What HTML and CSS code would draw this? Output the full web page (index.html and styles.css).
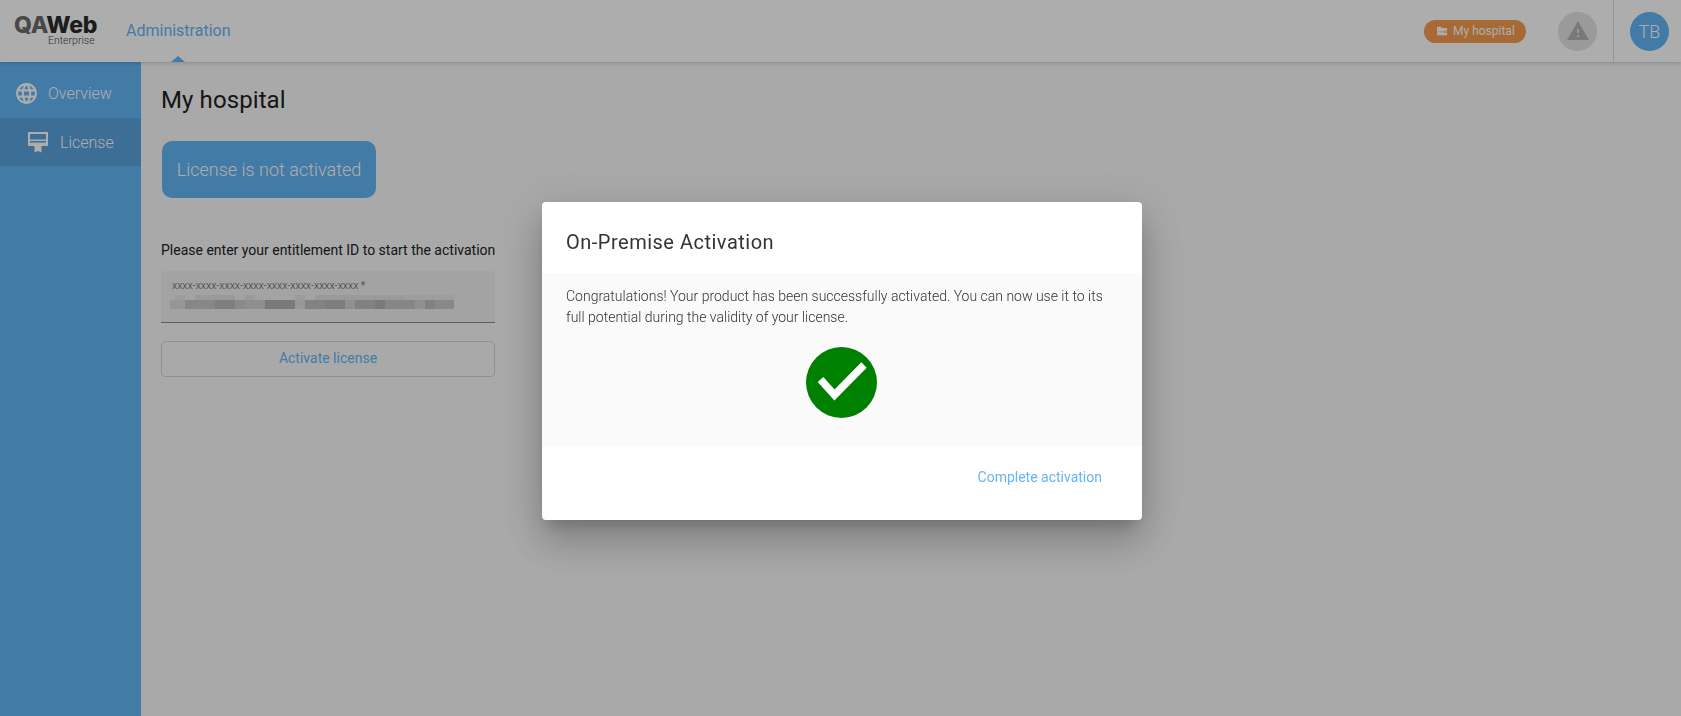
FILE: index.html
```html
<!DOCTYPE html>
<html lang="en">
<head>
    <meta charset="UTF-8">
    <title>QAWeb Enterprise - Administration</title>
    <link rel="stylesheet" href="styles.css">
</head>
<body>
    <header class="topbar">
        <div class="logo">
            <div class="logo-name"><span class="logo-qa">QA</span>Web</div>
            <div class="logo-sub">Enterprise</div>
        </div>
        <a href="#" class="nav-link">Administration</a>
        <div class="topbar-right">
            <div class="org-badge">
                <svg class="org-icon" viewBox="0 0 12 12">
                    <path fill="#fff" d="M0 1h4.500l1.500 1.500h6V11H0z"/>
                    <path fill="none" stroke="#f79c4e" stroke-width="1" stroke-dasharray="1.500 1" d="M1 7h7"/>
                    <path fill="none" stroke="#f79c4e" stroke-width="1" d="M9 5.500v3M10.800 5.500v3"/>
                </svg>
                <span>My hospital</span>
            </div>
            <div class="alert-circle">
                <svg viewBox="0 0 24 24" width="24" height="24">
                    <path fill="#b3b3b3" d="M1 21h22L12 2 1 21zm12-3h-2v-2h2v2zm0-4h-2v-4h2v4z"/>
                </svg>
            </div>
            <div class="user-cell">
                <div class="avatar">TB</div>
            </div>
        </div>
    </header>

    <div class="layout">
        <nav class="sidebar">
            <a href="#" class="side-item">
                <svg viewBox="0 0 24 24" width="25" height="25">
                    <path fill="#fff" d="M11.99 2C6.47 2 2 6.48 2 12s4.47 10 9.99 10C17.52 22 22 17.52 22 12S17.52 2 11.99 2zm6.93 6h-2.95c-.32-1.25-.78-2.45-1.38-3.56 1.84.63 3.37 1.91 4.33 3.56zM12 4.04c.83 1.2 1.48 2.53 1.91 3.96h-3.82c.43-1.43 1.08-2.76 1.91-3.96zM4.26 14C4.1 13.36 4 12.69 4 12s.1-1.36.26-2h3.38c-.08.66-.14 1.32-.14 2 0 .68.06 1.34.14 2H4.26zm.82 2h2.95c.32 1.25.78 2.45 1.38 3.56-1.84-.63-3.37-1.9-4.33-3.56zm2.95-8H5.08c.96-1.66 2.49-2.93 4.33-3.56C8.81 5.55 8.35 6.75 8.03 8zM12 19.96c-.83-1.2-1.48-2.53-1.91-3.96h3.82c-.43 1.43-1.08 2.76-1.91 3.96zM14.34 14H9.66c-.09-.66-.16-1.32-.16-2 0-.68.07-1.35.16-2h4.68c.09.65.16 1.32.16 2 0 .68-.07 1.34-.16 2zm.25 5.56c.6-1.11 1.06-2.31 1.38-3.56h2.95c-.96 1.65-2.49 2.93-4.33 3.56zM16.36 14c.08-.66.14-1.32.14-2 0-.68-.06-1.34-.14-2h3.38c.16.64.26 1.31.26 2s-.1 1.36-.26 2h-3.38z"/>
                </svg>
                <span>Overview</span>
            </a>
            <a href="#" class="side-item side-item-active">
                <svg viewBox="0 0 22 22" width="22" height="22">
                    <path fill="none" stroke="#fff" stroke-width="2" d="M2 2h18v12H2z"/>
                    <path fill="#fff" d="M2 8.500h18v1.500H2z"/>
                    <path fill="#fff" d="M2 11.500h18V14H2z"/>
                    <path fill="#fff" d="M7.500 15h7v6.500l-3.500-1.500-3.500 1.500z"/>
                </svg>
                <span>License</span>
            </a>
        </nav>

        <main class="content">
            <h1>My hospital</h1>
            <div class="license-status">License is not activated</div>
            <p class="entitlement-label">Please enter your entitlement ID to start the activation</p>
            <div class="entitlement-field">
                <label>xxxx-xxxx-xxxx-xxxx-xxxx-xxxx-xxxx-xxxx *</label>
                <div class="blurred-value"></div>
            </div>
            <button class="activate-btn">Activate license</button>
        </main>
    </div>

    <div class="backdrop">
        <div class="dialog">
            <div class="dialog-title">On-Premise Activation</div>
            <div class="dialog-body">
                <p>Congratulations! Your product has been successfully activated. You can now use it to its full potential during the validity of your license.</p>
                <svg class="success-check" viewBox="0 0 71 71" width="71" height="71">
                    <circle cx="35.500" cy="35.500" r="35.500" fill="#008000"/>
                    <path fill="none" stroke="#fff" stroke-width="7.500" d="M14.500 32.500 28.500 48 58 18"/>
                </svg>
            </div>
            <div class="dialog-actions">
                <a href="#" class="complete-link">Complete activation</a>
            </div>
        </div>
    </div>
</body>
</html>
```

FILE: styles.css
```css
html, body {
    height: 100%;
}

body {
    margin: 0;
    font-family: Roboto, 'Liberation Sans', sans-serif;
    background: #fafafa;
    color: #212121;
    overflow: hidden;
    display: flex;
    flex-direction: column;
}

a {
    text-decoration: none;
}

/* top bar */
.topbar {
    height: 62px;
    flex: none;
    background: #fff;
    display: flex;
    align-items: stretch;
    box-shadow: 0 1px 4px rgba(0, 0, 0, 0.2);
    position: relative;
    z-index: 1;
}

.logo {
    width: 126px;
    padding: 14px 0 0 14px;
    box-sizing: border-box;
}

.logo-name {
    font-family: Inter, Roboto, sans-serif;
    font-weight: 800;
    font-size: 23px;
    line-height: 22px;
    color: #2b2b2b;
    letter-spacing: -0.3px;
}

.logo-qa {
    color: #6a6a6a;
}

.logo-sub {
    font-size: 10.500px;
    font-weight: 300;
    line-height: 11px;
    color: #444;
    margin: -1px 0 0 34px;
}

.nav-link {
    position: relative;
    color: #64b5f6;
    font-size: 16px;
    line-height: 62px;
}

.nav-link::after {
    content: "";
    position: absolute;
    left: 45px;
    bottom: 0;
    border-left: 7px solid transparent;
    border-right: 7px solid transparent;
    border-bottom: 6px solid #64b5f6;
}

.topbar-right {
    margin-left: auto;
    display: flex;
    align-items: center;
}

.org-badge {
    height: 23px;
    width: 102px;
    box-sizing: border-box;
    padding-left: 13px;
    border-radius: 12px;
    background: #f79c4e;
    color: #fff;
    font-size: 12px;
    display: flex;
    align-items: center;
    gap: 6px;
}

.org-icon {
    width: 10px;
    height: 10px;
}

.alert-circle {
    width: 39px;
    height: 39px;
    margin-left: 32px;
    border-radius: 50%;
    background: #e4e4e4;
    display: flex;
    align-items: center;
    justify-content: center;
}

.user-cell {
    width: 68px;
    height: 62px;
    margin-left: 16px;
    border-left: 1px solid #dcdcdc;
    box-sizing: border-box;
    display: flex;
    align-items: center;
    padding-left: 16px;
}

.avatar {
    width: 39px;
    height: 39px;
    border-radius: 50%;
    background: #64b5f6;
    color: #fff;
    font-size: 18px;
    font-weight: 300;
    display: flex;
    align-items: center;
    justify-content: center;
}

/* sidebar + main */
.layout {
    flex: 1;
    display: flex;
    min-height: 0;
}

.sidebar {
    width: 141px;
    flex: none;
    background: #64b5f6;
    display: flex;
    flex-direction: column;
}

.side-item {
    height: 56px;
    padding: 6px 0 0 14px;
    box-sizing: border-box;
    display: flex;
    align-items: center;
    gap: 9px;
    color: #fff;
    font-size: 16px;
    font-weight: 300;
}

.side-item-active {
    height: 48px;
    padding: 0 0 0 27px;
    gap: 11px;
    background: #5aa3de;
}

.content {
    flex: 1;
    padding: 0 0 0 20px;
}

.content h1 {
    margin: 23px 0 26px;
    font-size: 24px;
    font-weight: 400;
    line-height: 30px;
    letter-spacing: 0.1px;
    color: #212121;
}

.license-status {
    width: 214px;
    height: 57px;
    margin-left: 1px;
    border-radius: 10px;
    background: #64b5f6;
    color: #fff;
    font-size: 18px;
    font-weight: 300;
    display: flex;
    align-items: center;
    justify-content: center;
}

.entitlement-label {
    margin: 42px 0 11px;
    font-size: 14px;
    line-height: 20px;
}

.entitlement-field {
    width: 334px;
    height: 52px;
    box-sizing: border-box;
    padding: 9px 11px 0;
    background: #f0f0f0;
    border-radius: 4px 4px 0 0;
    border-bottom: 1px solid #8a8a8a;
}

.entitlement-field label {
    display: block;
    font-size: 10.600px;
    font-weight: 300;
    line-height: 12px;
    color: #555;
}

.blurred-value {
    width: 284px;
    height: 14px;
    margin: 3px 0 0 -2px;
    background:
        linear-gradient(90deg,
            #f0f0f0 0 5px, #e6e6e6 5px 15px, #f0f0f0 15px 25px, #e4e4e4 25px 65px, #f0f0f0 65px 75px, #e4e4e4 75px 85px,
            #f0f0f0 85px 125px, #e6e6e6 125px 135px, #f0f0f0 135px 145px, #e4e4e4 145px 235px, #e8e8e8 235px 284px) 0 0 / 100% 5px no-repeat,
        linear-gradient(90deg,
            #dedede 0 15px, #c8c8c8 15px 45px, #bcbcbc 45px 65px, #cccccc 65px 75px, #d2d2d2 75px 95px,
            #b4b4b4 95px 125px, #e0e0e0 125px 135px, #c0c0c0 135px 155px, #b8b8ba 155px 175px, #d4d4d4 175px 185px,
            #bebebe 185px 205px, #b4b4b8 205px 215px, #c6c6c6 215px 245px, #d4d4d4 245px 255px, #bebebe 255px 265px,
            #cacaca 265px 275px, #c8c8ce 275px 284px) 0 5px / 100% 9px no-repeat;
}

.activate-btn {
    display: block;
    width: 334px;
    height: 36px;
    margin-top: 18px;
    padding: 0 0 2px;
    background: transparent;
    border: 1px solid #d6d6d6;
    border-radius: 4px;
    color: #64b5f6;
    font-family: inherit;
    font-size: 14px;
}

/* dialog */
.backdrop {
    position: fixed;
    inset: 0;
    z-index: 10;
    background: rgba(0, 0, 0, 0.32);
    display: flex;
    align-items: center;
    justify-content: center;
    padding: 6px 0 0 3px;
}

.dialog {
    width: 600px;
    height: 318px;
    background: #fff;
    border-radius: 4px;
    display: flex;
    flex-direction: column;
    box-shadow: 0 11px 15px -7px rgba(0, 0, 0, 0.2), 0 24px 38px 3px rgba(0, 0, 0, 0.14), 0 9px 46px 8px rgba(0, 0, 0, 0.12);
}

.dialog-title {
    height: 71px;
    flex: none;
    box-sizing: border-box;
    padding: 26px 24px 0;
    font-size: 20px;
    line-height: 28px;
    letter-spacing: 0.5px;
    color: #333;
}

.dialog-body {
    height: 173px;
    flex: none;
    box-sizing: border-box;
    padding: 13px 24px 0;
    background: #fafafa;
    display: flex;
    flex-direction: column;
}

.dialog-body p {
    margin: 0;
    font-size: 14px;
    font-weight: 300;
    line-height: 21px;
    color: #333;
}

.success-check {
    margin: 19px 0 0 240px;
    flex: none;
}

.dialog-actions {
    flex: 1;
    display: flex;
    justify-content: flex-end;
    padding: 23px 40px 0 0;
}

.complete-link {
    color: #64b5f6;
    font-size: 14px;
    line-height: 16px;
    height: 16px;
}
```
